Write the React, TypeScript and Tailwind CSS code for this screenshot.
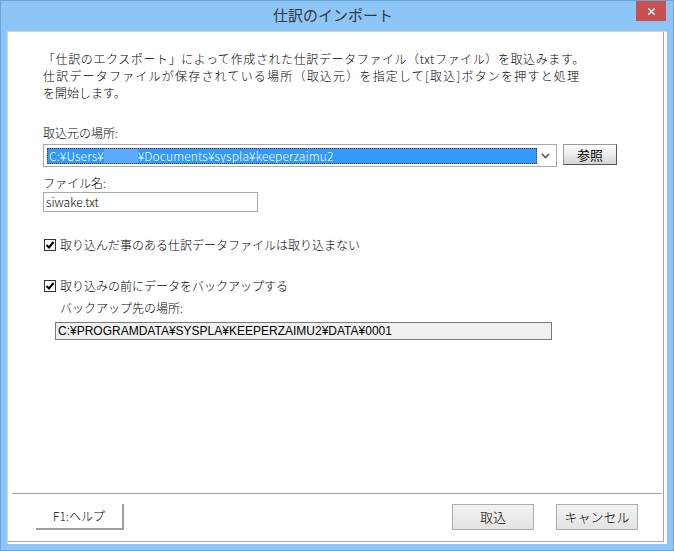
import { X } from "lucide-react";

const FONT = "font-['Noto_Sans_CJK_JP',sans-serif]";

function CheckBox() {
  return (
    <span className="w-[12px] h-[12px] border border-[#333333] bg-white flex items-center justify-center shrink-0">
      <svg width="10" height="10" viewBox="0 0 10 10">
        <path d="M1.5 5 L4 7.5 L8.5 2" fill="none" stroke="#000" strokeWidth="2" />
      </svg>
    </span>
  );
}

export default function App() {
  return (
    <div
      className={`${FONT} w-[674px] h-[551px] bg-[#8cc5f6] border border-[#6aa5da] flex flex-col text-[12px] font-light text-black`}
    >
      {/* title bar */}
      <div className="relative h-[30px] flex items-center justify-center">
        <span className="text-[15px] font-normal text-[#383838] pr-[8px] -mt-[2px]">仕訳のインポート</span>
        <div className="absolute right-[7px] top-0 w-[30px] h-[20px] bg-[#c75050] flex items-center justify-center">
          <X size={11} strokeWidth={3} className="text-white" />
        </div>
      </div>

      {/* client area */}
      <div className="ml-[6px] mr-[6px] h-[513px] bg-white border-l border-t border-[#d3d3d3] pr-[3px] pb-[2px] flex">
        <div className="flex-1 border-r border-b border-[#a3a3a3] flex flex-col">
          <div className="pl-[35px] pt-[18px] leading-[17px] whitespace-nowrap">
            <p className="tracking-[0.6px]">「仕訳のエクスポート」によって作成された仕訳データファイル（txtファイル）を取込みます。</p>
            <p className="tracking-[1.2px]">仕訳データファイルが保存されている場所（取込元）を指定して[取込]ボタンを押すと処理</p>
            <p>を開始します。</p>
          </div>

          <div className="pl-[35px] mt-[24px] leading-[16px]">取込元の場所:</div>
          <div className="pl-[35px] mt-[3px] flex items-start gap-[6px]">
            <div className="w-[514px] h-[23px] border border-[#a9a9a9] bg-white flex items-center pl-[3px] pr-[4px]">
              <div className="w-[490px] h-[16px] bg-[#3399ff] border border-dotted border-[#5a3a20] flex items-center pl-[1px] text-white leading-[14px] whitespace-nowrap overflow-hidden tracking-[0.15px]">
                <span>C:¥Users¥</span>
                <span className="w-[34px] h-[14px] bg-[#5aabff]" />
                <span>¥Documents¥syspla¥keeperzaimu2</span>
              </div>
              <div className="flex-1 flex justify-end pr-[2px]">
                <svg width="9" height="6" viewBox="0 0 9 6">
                  <path d="M1 1 L4.5 4.5 L8 1" fill="none" stroke="#555" strokeWidth="1.6" />
                </svg>
              </div>
            </div>
            <div className="w-[54px] h-[21px] bg-gradient-to-b from-[#ffffff] to-[#d6d6d6] border border-[#9a9a9a] border-r-[#555555] border-b-[#555555] flex items-center justify-center text-[13px] font-normal leading-none">
              参照
            </div>
          </div>

          <div className="pl-[35px] mt-[8px] leading-[16px]">ファイル名:</div>
          <div className="pl-[35px] mt-[1px]">
            <div className="w-[215px] h-[20px] border border-[#a9a9a9] flex items-center pl-[2px]">
              siwake.txt
            </div>
          </div>

          <div className="pl-[36px] mt-[25px] flex items-center gap-[4px] leading-[16px]">
            <CheckBox />
            <span>取り込んだ事のある仕訳データファイルは取り込まない</span>
          </div>

          <div className="pl-[36px] mt-[25px] flex items-center gap-[4px] leading-[16px]">
            <CheckBox />
            <span>取り込みの前にデータをバックアップする</span>
          </div>
          <div className="pl-[52px] mt-[6px] leading-[16px]">バックアップ先の場所:</div>
          <div className="pl-[47px] mt-[6px]">
            <div className="w-[497px] h-[18px] bg-[#f0f0f0] border border-[#7a7a7a] flex items-center pl-[2px] leading-none font-['Liberation_Sans','Noto_Sans_CJK_JP',sans-serif] font-normal">
              C:¥PROGRAMDATA¥SYSPLA¥KEEPERZAIMU2¥DATA¥0001
            </div>
          </div>

          {/* footer */}
          <div className="mt-auto">
            <div className="ml-[4px] mr-[1px] h-px bg-[#a0a0a0]" />
            <div className="mt-[10px] mb-[11px] flex items-center pl-[28px] pr-[25px]">
              <div className="w-[88px] h-[26px] bg-white border-r-2 border-b-2 border-[#a0a0a0] flex items-center justify-center">
                F1:ヘルプ
              </div>
              <div className="ml-auto w-[82px] h-[26px] bg-gradient-to-b from-[#f2f2f2] to-[#e3e3e3] border border-[#acacac] flex items-center justify-center text-[13px]">
                取込
              </div>
              <div className="ml-[22px] w-[82px] h-[26px] bg-gradient-to-b from-[#f2f2f2] to-[#e3e3e3] border border-[#acacac] flex items-center justify-center text-[13px]">
                キャンセル
              </div>
            </div>
          </div>
        </div>
      </div>
    </div>
  );
}
